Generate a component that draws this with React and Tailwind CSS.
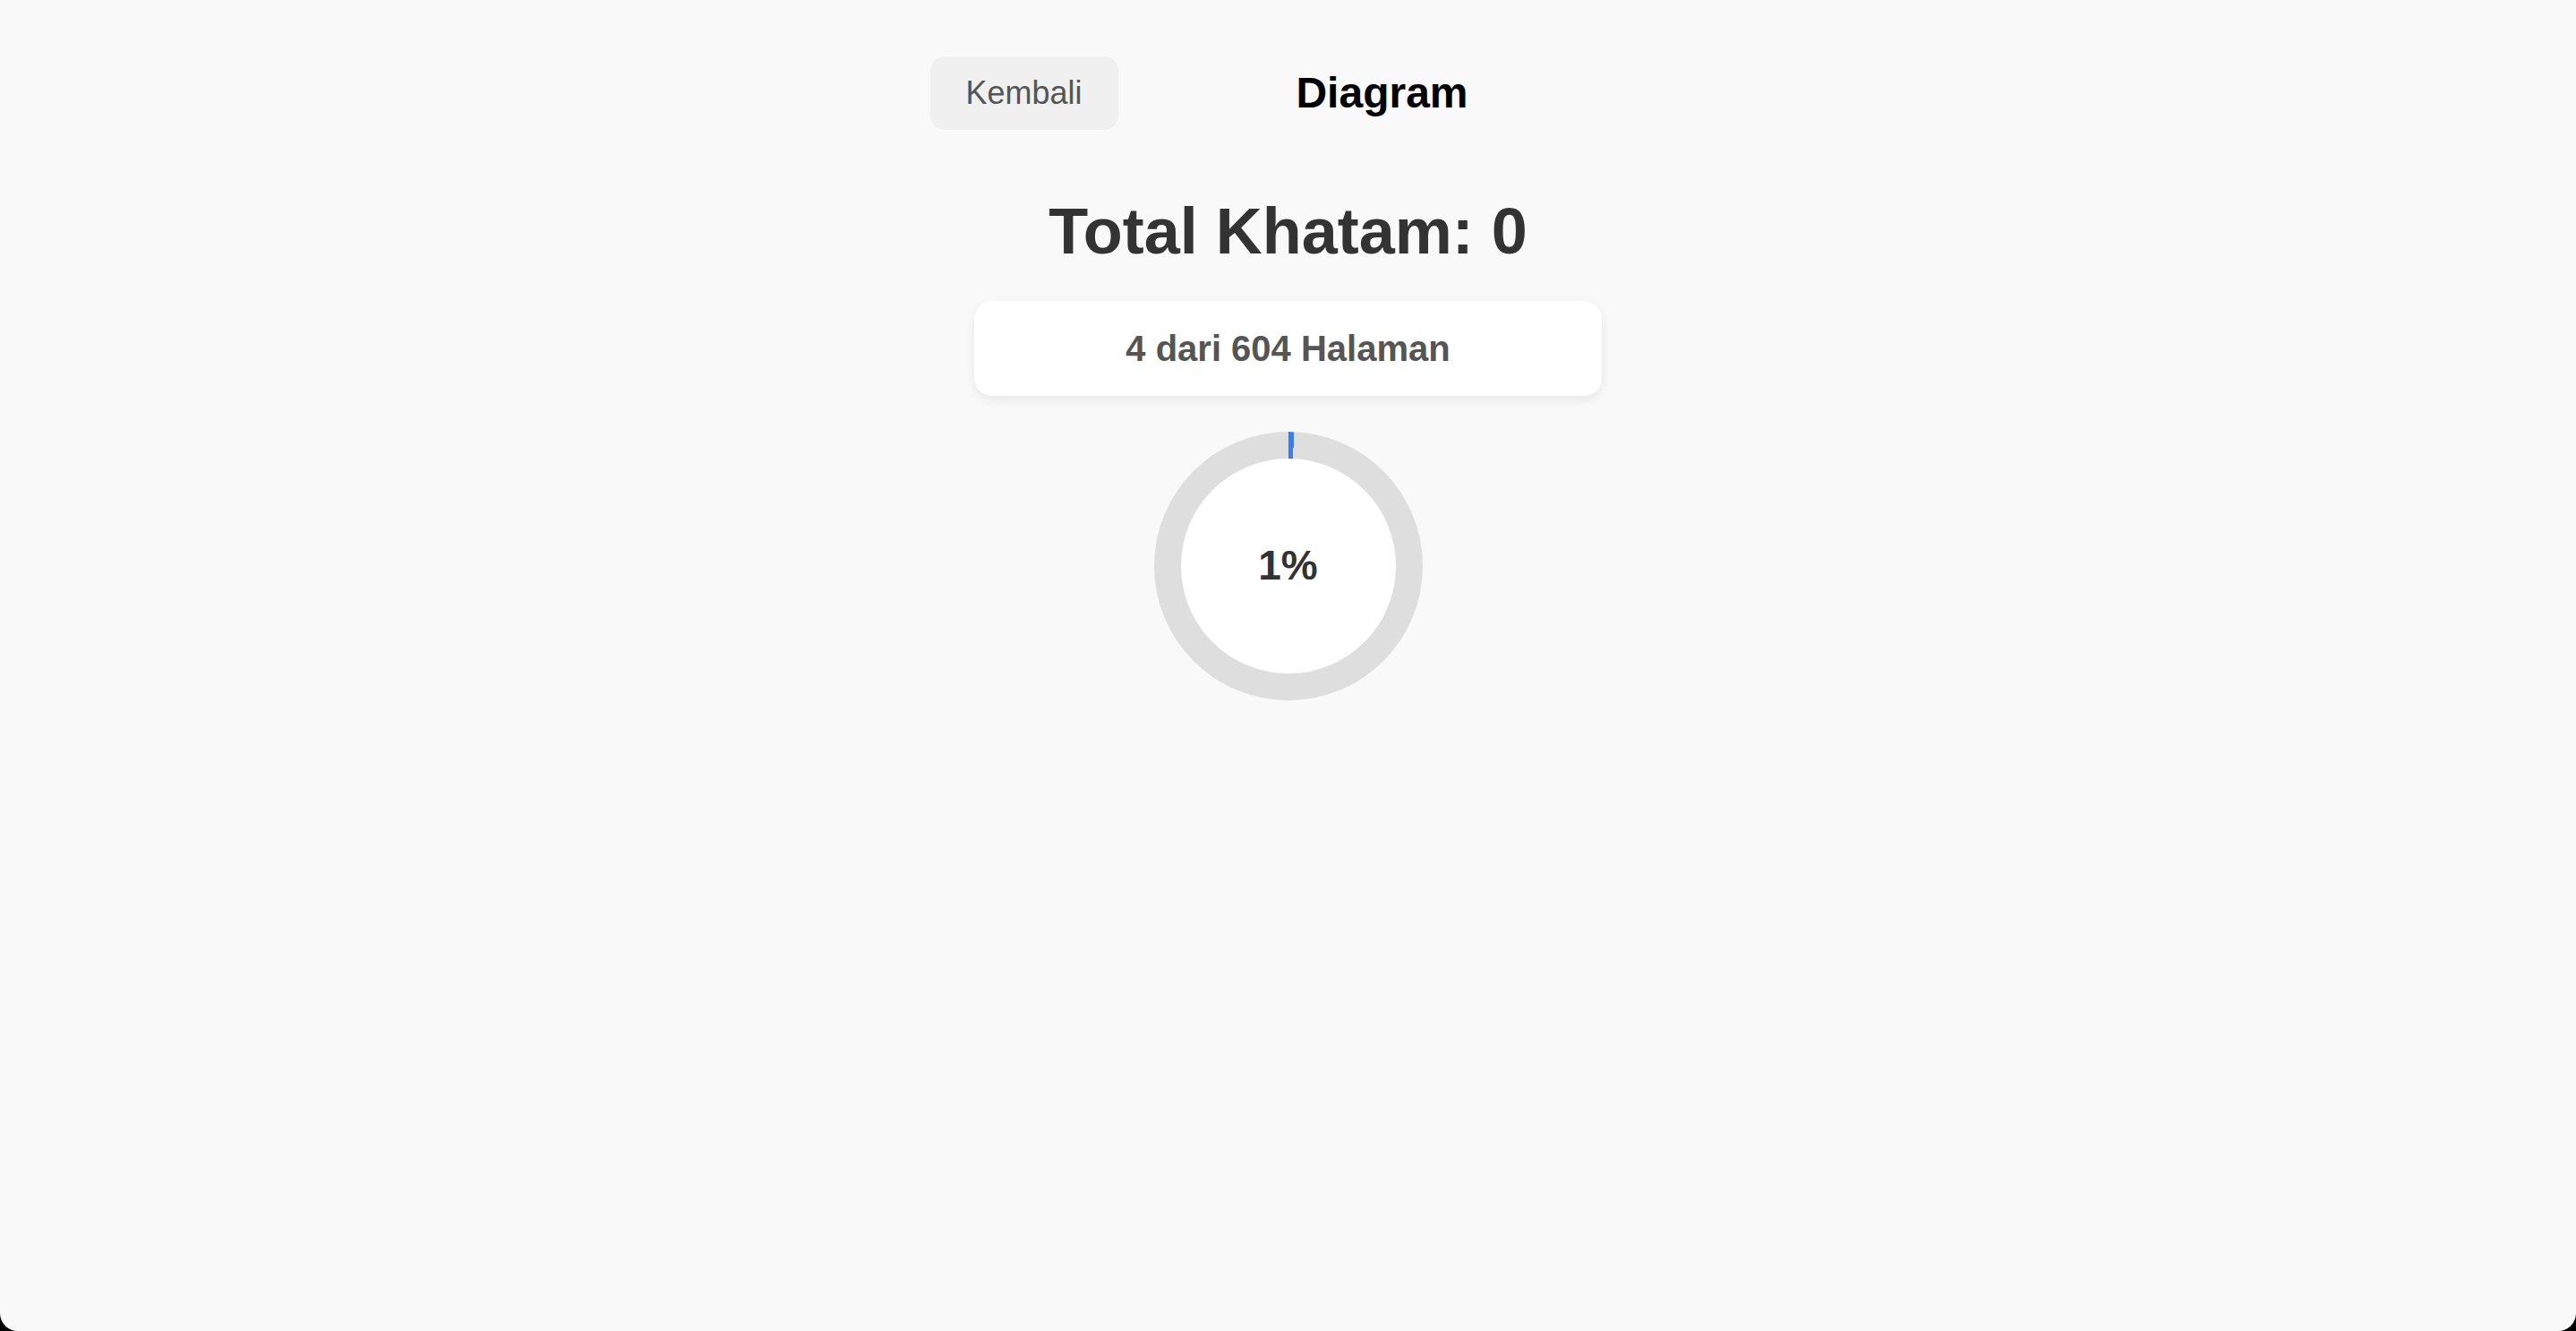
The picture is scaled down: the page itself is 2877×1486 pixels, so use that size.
import React from 'react';

const halamanDibaca = 4;
const totalHalaman = 604;

const Donut = ({ value, total }) => {
  const persen = (value / total) * 100;
  return (
    <div
      className="w-[300px] h-[300px] rounded-full flex items-center justify-center"
      style={{ background: `conic-gradient(#3b7ded 0% ${persen}%, #dedede ${persen}% 100%)` }}
    >
      <div className="w-[240px] h-[240px] rounded-full bg-white flex items-center justify-center">
        <span className="text-[46px] font-bold text-[#333]">{Math.ceil(persen)}%</span>
      </div>
    </div>
  );
};

const App = () => {
  return (
    <div className="h-screen bg-black" style={{ fontFamily: '"Liberation Sans", Arial, sans-serif' }}>
      <div className="h-full bg-[#f9f9f9] rounded-b-[20px] overflow-hidden">
        <div className="w-[800px] mx-auto pt-[63px]">
          {/* Header */}
          <div className="flex items-center">
            <button className="w-[210px] h-[82px] rounded-[16px] bg-[#f0f0f0] text-[36px] text-[#555]">
              Kembali
            </button>
            <h1 className="flex-1 text-center text-[48px] font-bold text-black">Diagram</h1>
          </div>

          {/* Total */}
          <h2 className="mt-[72px] text-center text-[72px] font-bold text-[#333] leading-[1.15]">
            Total Khatam: 0
          </h2>

          <div className="mt-[36px] w-[701px] h-[106px] mx-auto bg-white rounded-[20px] shadow-[0_4px_12px_rgba(0,0,0,0.08)] flex items-center justify-center">
            <p className="text-[40px] font-bold text-[#555]">
              {halamanDibaca} dari {totalHalaman} Halaman
            </p>
          </div>

          <div className="mt-[40px] flex justify-center">
            <Donut value={halamanDibaca} total={totalHalaman} />
          </div>
        </div>
      </div>
    </div>
  );
};

export default App;
